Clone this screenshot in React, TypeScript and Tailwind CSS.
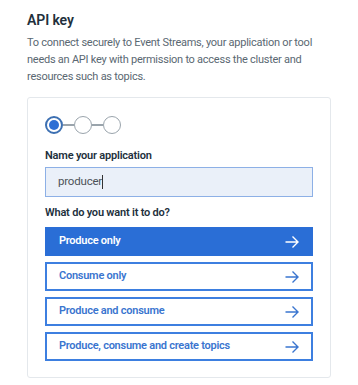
import React from 'react';

const options = ['Produce only', 'Consume only', 'Produce and consume', 'Produce, consume and create topics'];

const Arrow = ({ color }: { color: string }) => (
  <svg width="14" height="12" viewBox="0 0 14 12" fill="none" stroke={color} strokeWidth="1.4">
    <path d="M0.5 6h12.5M7.5 0.5L13 6l-5.5 5.5" />
  </svg>
);

export default function App() {
  const selected = 0;
  return (
    <div className="w-[358px] h-[385px] bg-white px-[27px] pt-[9px]" style={{ fontFamily: 'Roboto, sans-serif' }}>
      <h1 className="text-[14px] leading-[22px] font-semibold text-[#22303c] tracking-[-0.1px]">API key</h1>
      <p className="mt-[3px] text-[11px] leading-[17px] text-[#5a6872] tracking-[-0.25px]">
        To connect securely to Event Streams, your application or tool needs an API key with permission to access the cluster and resources such as topics.
      </p>
      <div className="mt-[12px] w-[304px] h-[281px] border border-[#e4e8ec] rounded-[3px] px-[17px] pt-[18px]">
        <div className="flex items-center">
          <div className="w-[18px] h-[18px] rounded-full border-2 border-[#3d70b2] flex items-center justify-center">
            <div className="w-[10px] h-[10px] rounded-full bg-[#2e6fd4]" />
          </div>
          <div className="w-[11px] h-[2px] bg-[#9aa4ac]" />
          <div className="w-[18px] h-[18px] rounded-full border-[1.5px] border-[#9aa4ac]" />
          <div className="w-[11px] h-[2px] bg-[#9aa4ac]" />
          <div className="w-[18px] h-[18px] rounded-full border-[1.5px] border-[#9aa4ac]" />
        </div>
        <div className="mt-[14px] text-[11px] leading-[16px] font-semibold text-[#22303c] tracking-[-0.2px]">Name your application</div>
        <div className="mt-[3px] h-[30px] w-[268px] bg-[#eaf0f9] border border-[#8db0e6] flex items-center px-[12px] text-[11.5px] text-[#4d5358] tracking-[-0.2px]">
          producer<span className="inline-block w-[1px] h-[14px] bg-[#333]" />
        </div>
        <div className="mt-[8px] text-[11px] leading-[16px] font-semibold text-[#22303c] tracking-[-0.2px]">What do you want it to do?</div>
        <div className="mt-[6px] flex flex-col gap-[6px]">
          {options.map((o, i) => (
            <div
              key={o}
              className={`h-[29px] w-[268px] flex items-center justify-between pl-[12px] pr-[12px] text-[11px] font-semibold tracking-[-0.25px] border-2 ${
                i === selected ? 'bg-[#2a6ed6] border-[#2a6ed6] text-white' : 'bg-white border-[#3d7fe0] text-[#3a75cf]'
              }`}
            >
              <span>{o}</span>
              <Arrow color={i === selected ? '#ffffff' : '#3a75cf'} />
            </div>
          ))}
        </div>
      </div>
    </div>
  );
}
